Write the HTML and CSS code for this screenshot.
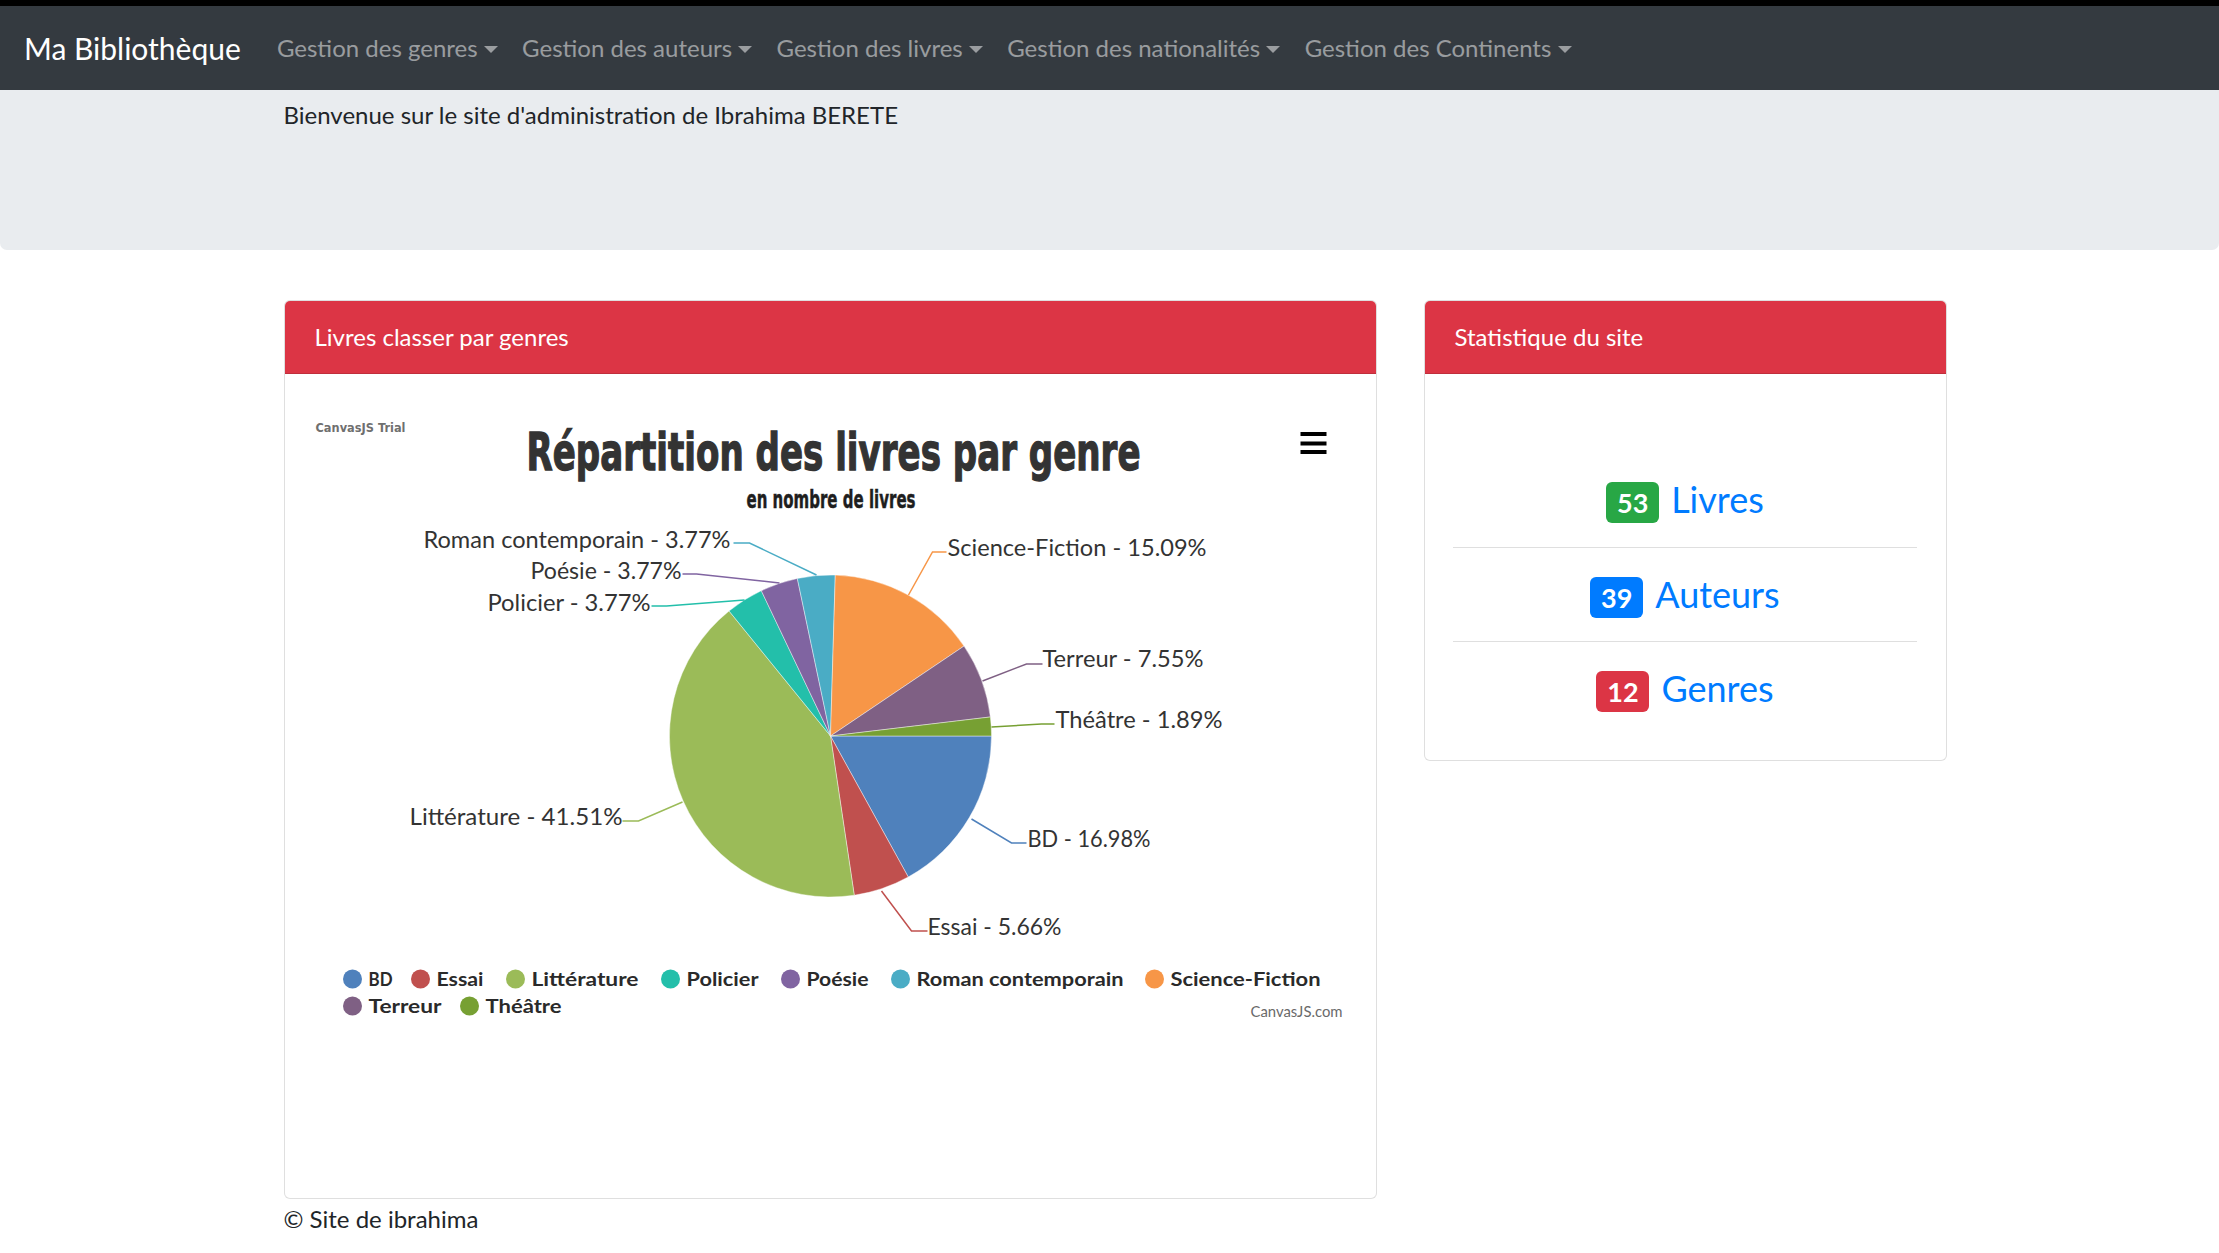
FILE: index.html
```html
<!DOCTYPE html>
<html lang="fr">
<head>
<meta charset="utf-8">
<title>Ma Bibliothèque</title>
<link rel="stylesheet" href="styles.css">
</head>
<body>
<div class="topbar"></div>
<nav class="navbar">
  <a class="brand" href="#">Ma Bibliothèque</a>
  <ul class="nav">
    <li><a class="nav-link" href="#">Gestion des genres</a></li>
    <li><a class="nav-link" href="#">Gestion des auteurs</a></li>
    <li><a class="nav-link" href="#">Gestion des livres</a></li>
    <li><a class="nav-link" href="#">Gestion des nationalités</a></li>
    <li><a class="nav-link" href="#">Gestion des Continents</a></li>
  </ul>
</nav>
<div class="jumbotron">
  <div class="container">
    <p class="welcome">Bienvenue sur le site d'administration de Ibrahima BERETE</p>
  </div>
</div>
<div class="container">
  <div class="row">
    <div class="col-main">
      <div class="card">
        <div class="card-header">Livres classer par genres</div>
        <div class="card-body chart-body">
          <svg class="chart" width="1090" height="824" viewBox="285.5 375 1090 824" xmlns="http://www.w3.org/2000/svg">
            <text class="trial" x="316" y="433" textLength="90" lengthAdjust="spacingAndGlyphs">CanvasJS Trial</text>
            <text class="ctitle" x="527" y="471" textLength="614" lengthAdjust="spacingAndGlyphs">Répartition des livres par genre</text>
            <text class="csub" x="747" y="509" textLength="169" lengthAdjust="spacingAndGlyphs">en nombre de livres</text>
            <g class="menu">
              <rect x="1301" y="433" width="26" height="4"/>
              <rect x="1301" y="442.5" width="26" height="4"/>
              <rect x="1301" y="451" width="26" height="4"/>
            </g>
            <g class="slices">
              <path fill="#4F81BC" d="M831 737 L992 737 A161 161 0 0 1 908.75 877.99 Z"/>
              <path fill="#C0504E" d="M831 737 L908.75 877.99 A161 161 0 0 1 854.77 896.23 Z"/>
              <path fill="#9BBB58" d="M831 737 L854.77 896.23 A161 161 0 0 1 729.54 611.97 Z"/>
              <path fill="#23BFAA" d="M831 737 L729.54 611.97 A161 161 0 0 1 761.77 591.65 Z"/>
              <path fill="#8064A1" d="M831 737 L761.77 591.65 A161 161 0 0 1 797.83 579.46 Z"/>
              <path fill="#4AACC5" d="M831 737 L797.83 579.46 A161 161 0 0 1 835.78 576.07 Z"/>
              <path fill="#F79647" d="M831 737 L835.78 576.07 A161 161 0 0 1 964.53 647.08 Z"/>
              <path fill="#7F6084" d="M831 737 L964.53 647.08 A161 161 0 0 1 990.87 717.96 Z"/>
              <path fill="#77A033" d="M831 737 L990.87 717.96 A161 161 0 0 1 992 737 Z"/>
            </g>
            <g class="connectors">
              <polyline stroke="#4AACC5" points="734,544 750,544 817,576"/>
              <polyline stroke="#8064A1" points="683,575 697,575 780,584"/>
              <polyline stroke="#23BFAA" points="652,607 667,607 745,601"/>
              <polyline stroke="#9BBB58" points="623,822 639,822 683,803"/>
              <polyline stroke="#F79647" points="947,553 933,553 909,596"/>
              <polyline stroke="#7F6084" points="1043,665 1027,665 983,682"/>
              <polyline stroke="#77A033" points="1055,725 1042,725 992,728"/>
              <polyline stroke="#4F81BC" points="1027,844 1012,844 972,820"/>
              <polyline stroke="#C0504E" points="928,932 912,932 882,892"/>
            </g>
            <g class="labels">
              <text x="424" y="549" textLength="307" lengthAdjust="spacingAndGlyphs">Roman contemporain - 3.77%</text>
              <text x="531" y="580" textLength="151" lengthAdjust="spacingAndGlyphs">Poésie - 3.77%</text>
              <text x="488" y="612" textLength="163" lengthAdjust="spacingAndGlyphs">Policier - 3.77%</text>
              <text x="410" y="826" textLength="213" lengthAdjust="spacingAndGlyphs">Littérature - 41.51%</text>
              <text x="948" y="557" textLength="259" lengthAdjust="spacingAndGlyphs">Science-Fiction - 15.09%</text>
              <text x="1043" y="668" textLength="161" lengthAdjust="spacingAndGlyphs">Terreur - 7.55%</text>
              <text x="1056" y="729" textLength="167" lengthAdjust="spacingAndGlyphs">Théâtre - 1.89%</text>
              <text x="1028" y="848" textLength="123" lengthAdjust="spacingAndGlyphs">BD - 16.98%</text>
              <text x="928" y="936" textLength="134" lengthAdjust="spacingAndGlyphs">Essai - 5.66%</text>
            </g>
            <g class="legend">
              <circle cx="353" cy="980" r="9.5" fill="#4F81BC"/>
              <text x="369" y="987" textLength="24" lengthAdjust="spacingAndGlyphs">BD</text>
              <circle cx="421" cy="980" r="9.5" fill="#C0504E"/>
              <text x="437" y="987" textLength="47" lengthAdjust="spacingAndGlyphs">Essai</text>
              <circle cx="516" cy="980" r="9.5" fill="#9BBB58"/>
              <text x="532" y="987" textLength="107" lengthAdjust="spacingAndGlyphs">Littérature</text>
              <circle cx="671" cy="980" r="9.5" fill="#23BFAA"/>
              <text x="687" y="987" textLength="72" lengthAdjust="spacingAndGlyphs">Policier</text>
              <circle cx="791" cy="980" r="9.5" fill="#8064A1"/>
              <text x="807" y="987" textLength="62" lengthAdjust="spacingAndGlyphs">Poésie</text>
              <circle cx="901" cy="980" r="9.5" fill="#4AACC5"/>
              <text x="917" y="987" textLength="207" lengthAdjust="spacingAndGlyphs">Roman contemporain</text>
              <circle cx="1155" cy="980" r="9.5" fill="#F79647"/>
              <text x="1171" y="987" textLength="150" lengthAdjust="spacingAndGlyphs">Science-Fiction</text>
              <circle cx="353" cy="1007" r="9.5" fill="#7F6084"/>
              <text x="369" y="1014" textLength="73" lengthAdjust="spacingAndGlyphs">Terreur</text>
              <circle cx="470" cy="1007" r="9.5" fill="#77A033"/>
              <text x="486" y="1014" textLength="76" lengthAdjust="spacingAndGlyphs">Théâtre</text>
            </g>
            <text class="credit" x="1251" y="1018" textLength="92" lengthAdjust="spacingAndGlyphs">CanvasJS.com</text>
          </svg>
        </div>
      </div>
    </div>
    <div class="col-side">
      <div class="card">
        <div class="card-header">Statistique du site</div>
        <div class="card-body stats-body">
          <ul class="list-group">
            <li class="list-item"><span class="badge badge-green">53</span><a class="stat-link" href="#">Livres</a></li>
            <li class="list-item"><span class="badge badge-blue">39</span><a class="stat-link" href="#">Auteurs</a></li>
            <li class="list-item"><span class="badge badge-red">12</span><a class="stat-link" href="#">Genres</a></li>
          </ul>
        </div>
      </div>
    </div>
  </div>
</div>
<footer class="container footer">© Site de ibrahima</footer>
</body>
</html>
```

FILE: styles.css
```css
* { box-sizing: border-box; }

html, body {
  margin: 0;
  padding: 0;
  background: #fff;
}

body {
  font-family: Lato, "Open Sans", "Noto Sans", sans-serif;
  font-size: 24px;
  line-height: 36px;
  color: #212529;
}

a { text-decoration: none; }

.topbar {
  height: 6px;
  background: #000;
}

.navbar {
  height: 84px;
  background: #343a40;
  display: flex;
  align-items: center;
  padding: 0 24px;
}

.brand {
  color: #fff;
  font-size: 30px;
  line-height: 45px;
  margin-right: 24px;
  white-space: nowrap;
}

.nav {
  list-style: none;
  margin: 0;
  padding: 0;
  display: flex;
}

.nav-link {
  display: block;
  padding: 12px 12.1px;
  color: rgba(255, 255, 255, 0.5);
  font-size: 24px;
  line-height: 36px;
  white-space: nowrap;
}

.nav-link::after {
  content: "";
  display: inline-block;
  margin-left: 6.3px;
  vertical-align: 4px;
  border-top: 7px solid;
  border-left: 7px solid transparent;
  border-right: 7px solid transparent;
}

.jumbotron {
  height: 160px;
  background: #e9ecef;
  border-radius: 0 0 7px 7px;
  padding-top: 7px;
  margin-bottom: 50px;
}

.container {
  width: 1663px;
  margin-left: 283.5px;
}

.welcome {
  margin: 0;
}

.row {
  display: flex;
  align-items: flex-start;
  gap: 47px;
}

.col-main { width: 1093px; flex: none; }
.col-side { width: 523px; flex: none; }

.card {
  border: 1.5px solid rgba(0, 0, 0, 0.125);
  border-radius: 6px;
  background: #fff;
  overflow: hidden;
}

.card-header {
  background: #dc3545;
  color: #fff;
  padding: 18px 30px;
  font-size: 24px;
  line-height: 36px;
  border-bottom: 1.5px solid rgba(0, 0, 0, 0.125);
}

.chart-body {
  height: 824px;
}

.chart {
  display: block;
}

.trial {
  font-family: "DejaVu Sans", sans-serif;
  font-weight: bold;
  font-size: 13px;
  fill: #6f6f6f;
}

.ctitle {
  font-family: "DejaVu Sans", sans-serif;
  font-weight: bold;
  font-size: 52px;
  fill: #333;
  stroke: #333;
  stroke-width: 1.4;
}

.csub {
  font-family: "DejaVu Sans", sans-serif;
  font-weight: bold;
  font-size: 24px;
  fill: #1e1e1e;
  stroke: #1e1e1e;
  stroke-width: 0.5;
}

.menu rect { fill: #000; }

.slices path {
  stroke: #fff;
  stroke-width: 0.6;
  stroke-opacity: 0.7;
}

.connectors polyline {
  fill: none;
  stroke-width: 1.5;
}

.labels text {
  font-family: Lato, "Open Sans", sans-serif;
  font-size: 24px;
  fill: #333;
}

.legend text {
  font-family: Lato, "Open Sans", sans-serif;
  font-weight: bold;
  font-size: 19px;
  fill: #2a2a2a;
}

.credit {
  font-family: Lato, "Open Sans", sans-serif;
  font-size: 15px;
  fill: #6a6a6a;
}

.stats-body {
  padding: 78.5px 28.5px 25.5px;
}

.list-group {
  list-style: none;
  margin: 0;
  padding: 0;
}

.list-item {
  height: 94px;
  display: flex;
  align-items: center;
  justify-content: center;
  gap: 12px;
  border-top: 1.5px solid #dfdfdf;
}

.list-item:first-child {
  border-top: none;
}

.badge {
  display: inline-block;
  color: #fff;
  font-weight: bold;
  font-size: 27px;
  line-height: 27px;
  padding: 7px 10.8px;
  border-radius: 6px;
  margin-top: 6px;
}

.badge-green { background: #28a745; }
.badge-blue { background: #007bff; }
.badge-red { background: #dc3545; }

.stat-link {
  color: #007bff;
  font-size: 36px;
  line-height: 43px;
}

.footer {
  padding-top: 2px;
  line-height: 36px;
}
```
